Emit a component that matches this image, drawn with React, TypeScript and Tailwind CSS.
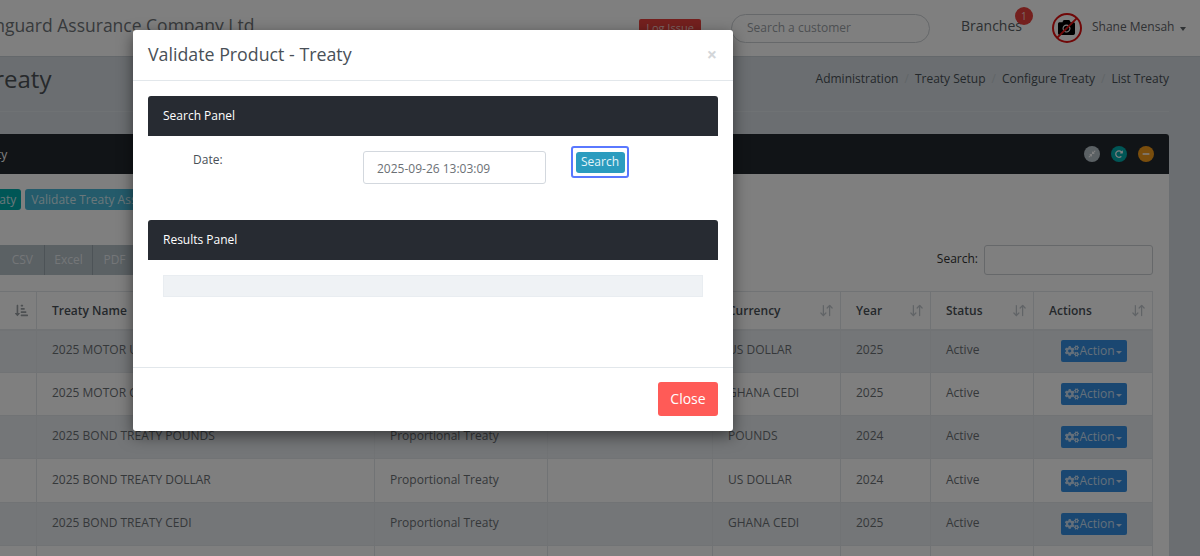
import React from "react";
import { FaCamera, FaCogs, FaCompressAlt, FaMinus, FaRedoAlt, FaSortAmountDownAlt } from "react-icons/fa";
import { LuArrowDownUp } from "react-icons/lu";

const headers = [
  { name: "", icon: "amount" },
  { name: "Treaty Name" },
  { name: "" },
  { name: "" },
  { name: "Currency" },
  { name: "Year" },
  { name: "Status" },
  { name: "Actions" },
];

const rows = [
  ["2025 MOTOR USD TREATY", "Proportional Treaty", "US DOLLAR", "2025"],
  ["2025 MOTOR CEDI TREATY", "Proportional Treaty", "GHANA CEDI", "2025"],
  ["2025 BOND TREATY POUNDS", "Proportional Treaty", "POUNDS", "2024"],
  ["2025 BOND TREATY DOLLAR", "Proportional Treaty", "US DOLLAR", "2024"],
  ["2025 BOND TREATY CEDI", "Proportional Treaty", "GHANA CEDI", "2025"],
  ["", "", "", ""],
];

const cell = "border border-[#e2e7eb] px-[15px] align-middle";

const PanelBar: React.FC<{ title: string }> = ({ title }) => (
  <div className="flex h-10 items-center rounded-t-[3px] bg-[#272b32] px-[15px] text-xs font-medium text-white">
    {title}
  </div>
);

const App: React.FC = () => {
  return (
    <div className="relative h-[556px] w-[1200px] overflow-hidden bg-[#d6dde2] font-['Open_Sans',sans-serif] text-[#5c6268]">
      {/* top bar */}
      <header className="flex h-[57px] items-center border-b border-[#c8d0d6] bg-white">
        <div className="ml-[-26px] w-[647px] shrink-0 pb-[6px] text-[17.5px] whitespace-nowrap text-[#6f7478]">
          Vanguard Assurance Company Ltd
        </div>
        <div className="ml-[18px] flex h-[18px] w-[62px] shrink-0 items-center justify-center rounded-[2px] bg-[#e8413c] text-[11px] text-[#f8c9c7]">
          Log Issue
        </div>
        <div className="ml-[30px] flex h-[29px] w-[199px] shrink-0 items-center rounded-full border border-[#ccd0d4] px-[15px] text-xs text-[#9aa0a5]">
          Search a customer
        </div>
        <div className="relative ml-[31px] shrink-0 pb-[4px] text-sm text-[#5a5f64]">
          Branches
          <span className="absolute top-[-9px] right-[-11px] flex h-[18px] w-[18px] items-center justify-center rounded-full bg-[#e8413c] text-[10px] text-[#f9d2d0]">
            1
          </span>
        </div>
        <div className="relative mb-[1px] ml-[30px] flex h-[30px] w-[30px] shrink-0 items-center justify-center rounded-full border-[2px] border-[#e01010]">
          <FaCamera className="text-[17px] text-black" />
          <span className="absolute top-[12px] left-[-1px] h-[2px] w-[28px] -rotate-45 bg-[#e01010]" />
        </div>
        <div className="ml-[10px] shrink-0 pb-[2px] text-xs text-[#5f6469]">Shane Mensah</div>
        <span className="mt-[2px] ml-[6px] h-0 w-0 border-x-[3px] border-t-[4px] border-x-transparent border-t-[#5f6469]" />
      </header>

      {/* page content */}
      <main className="mr-[31px] ml-[-120px]">
        <div className="flex h-[55px] items-center justify-between border-b border-[#dee4e8] pb-[11px]">
          <h1 className="ml-[101px] text-2xl text-[#4d5257]">Treaty</h1>
          <div className="flex items-center gap-[6px] text-xs text-[#495057]">
            <span>Administration</span>
            <span className="text-[#c3cad0]">/</span>
            <span>Treaty Setup</span>
            <span className="text-[#c3cad0]">/</span>
            <span>Configure Treaty</span>
            <span className="text-[#c3cad0]">/</span>
            <span>List Treaty</span>
          </div>
        </div>

        <section className="mt-[22px] rounded-t-[3px] bg-white">
          <div className="flex h-10 items-center justify-between rounded-t-[3px] bg-[#23282e] pr-[15px] pl-[120px] text-xs font-medium text-white">
            <span className="mt-[1px] ml-[-28px]">Treaty</span>
            <div className="flex items-center gap-[11px]">
              <span className="flex h-4 w-4 items-center justify-center rounded-full bg-[#b6c2c9] text-[8px] text-white">
                <FaCompressAlt />
              </span>
              <span className="flex h-4 w-4 items-center justify-center rounded-full bg-[#00acac] text-[8px] text-white">
                <FaRedoAlt />
              </span>
              <span className="flex h-4 w-4 items-center justify-center rounded-full bg-[#f59c1a] text-[8px] text-white">
                <FaMinus />
              </span>
            </div>
          </div>

          <div className="px-4 pt-[15px]">
            <div className="flex gap-1 text-xs text-[#d5eef5]">
              <span className="flex h-[21px] items-center rounded-[3px] bg-[#00acac] pr-[5px] pl-[45px]">Create Treaty</span>
              <span className="flex h-[21px] items-center rounded-[3px] bg-[#49b6d6] px-[6px]">Validate Treaty Assets</span>
            </div>

            <div className="mt-[35px] flex items-center justify-between">
              <div className="flex h-[30px] text-xs text-[#e8ecf0]">
                <span className="flex w-[148px] items-center justify-end bg-[#b6c2c9] pr-[11px]">CSV</span>
                <span className="flex w-12 items-center justify-center border-l border-[#9aa7ae] bg-[#b6c2c9]">Excel</span>
                <span className="flex w-[44px] items-center justify-center border-l border-[#9aa7ae] bg-[#b6c2c9]">PDF</span>
              </div>
              <label className="flex items-center gap-[6px] text-xs text-[#333]">
                <span className="mb-[2px]">Search:</span>
                <span className="h-[30px] w-[169px] rounded-[3px] border border-[#ccd0d4] bg-white" />
              </label>
            </div>

            <table className="mt-4 w-full table-fixed border-collapse text-xs text-[#6b7075]">
              <colgroup>
                <col className="w-[140px]" />
                <col className="w-[338px]" />
                <col className="w-[173px]" />
                <col className="w-[165px]" />
                <col className="w-[128px]" />
                <col className="w-[90px]" />
                <col className="w-[103px]" />
                <col />
              </colgroup>
              <thead>
                <tr className="h-[38px]">
                  {headers.map((h, i) => (
                    <th key={i} className={`${cell} border-b-2 pt-[1px] text-left font-semibold text-[#495057]`}>
                      <div className="flex items-center justify-between">
                        <span>{h.name}</span>
                        {h.icon ? (
                          <FaSortAmountDownAlt className="mr-[-7px] text-[13px] text-[#9aa0a5]" />
                        ) : (
                          <LuArrowDownUp className="mr-[-9px] text-[15px] text-[#c3c9ce]" />
                        )}
                      </div>
                    </th>
                  ))}
                </tr>
              </thead>
              <tbody>
                {rows.map((r, i) => (
                  <tr
                    key={i}
                    className={`${i === 3 ? "h-[44px]" : "h-[43px]"} ${i % 2 === 0 ? "bg-[#e8edf0]" : "bg-white"}`}
                  >
                    <td className={`${cell} pb-[2px]`} />
                    <td className={`${cell} pb-[2px]`}>{r[0]}</td>
                    <td className={`${cell} pb-[2px]`}>{r[1]}</td>
                    <td className={`${cell} pb-[2px]`} />
                    <td className={`${cell} pb-[2px]`}>{r[2]}</td>
                    <td className={`${cell} pb-[2px]`}>{r[3]}</td>
                    <td className={`${cell} pb-[2px]`}>{r[0] && "Active"}</td>
                    <td className={`${cell} text-center`}>
                      {r[0] && (
                        <span className="ml-[1px] inline-flex h-[22px] w-[66px] items-center justify-center rounded-[2px] bg-[#348fe2] align-middle text-[#c8dff5]">
                          <FaCogs className="text-[14px]" />
                          Action
                          <span className="mt-[2px] ml-px h-0 w-0 border-x-[3px] border-t-[3px] border-x-transparent border-t-[#c8dff5]" />
                        </span>
                      )}
                    </td>
                  </tr>
                ))}
              </tbody>
            </table>
          </div>
        </section>
      </main>

      <div className="absolute inset-0 bg-black/50" />

      {/* modal */}
      <div className="absolute top-[30px] left-[133px] w-[600px] rounded-[3px] bg-white text-[#5c6268] shadow-[0_5px_15px_rgba(0,0,0,0.5)]">
        <div className="flex h-[51px] items-center justify-between border-b border-[#e2e7eb] pr-4 pb-[2px] pl-[15px]">
          <h2 className="text-[17.8px] text-[#495057]">Validate Product - Treaty</h2>
          <span className="text-lg font-bold text-[#d3d6d9]">×</span>
        </div>

        <div className="h-[286px] p-[15px]">
          <PanelBar title="Search Panel" />
          <div className="flex h-[84px] items-start text-xs">
            <span className="mt-[16px] ml-[45px] w-[170px] text-[#495057]">Date:</span>
            <div className="mt-[15px] flex h-[33px] w-[183px] items-center rounded-[3px] border border-[#d3d8de] px-[13px] pt-[2px] text-[#6b7075]">
              2025-09-26 13:03:09
            </div>
            <div className="mt-[10px] ml-[25px] flex h-[32px] w-[58px] items-center justify-center rounded-[3px] border-2 border-[#5a78ff]">
              <span className="flex h-[21px] w-[49px] items-center justify-center rounded-[3px] bg-[#2b9cbf] text-[#e4f4f9]">
                Search
              </span>
            </div>
          </div>
          <PanelBar title="Results Panel" />
          <div className="mx-[15px] mt-[15px] h-[22px] border border-[#e9edf1] bg-[#eff2f5]" />
        </div>

        <div className="flex h-[64px] items-start justify-end border-t border-[#e2e7eb] px-[15px] pt-[14px]">
          <span className="flex h-[34px] w-[60px] items-center justify-center rounded-[3px] bg-[#ff5b57] text-sm text-white">
            Close
          </span>
        </div>
      </div>
    </div>
  );
};

export default App;
